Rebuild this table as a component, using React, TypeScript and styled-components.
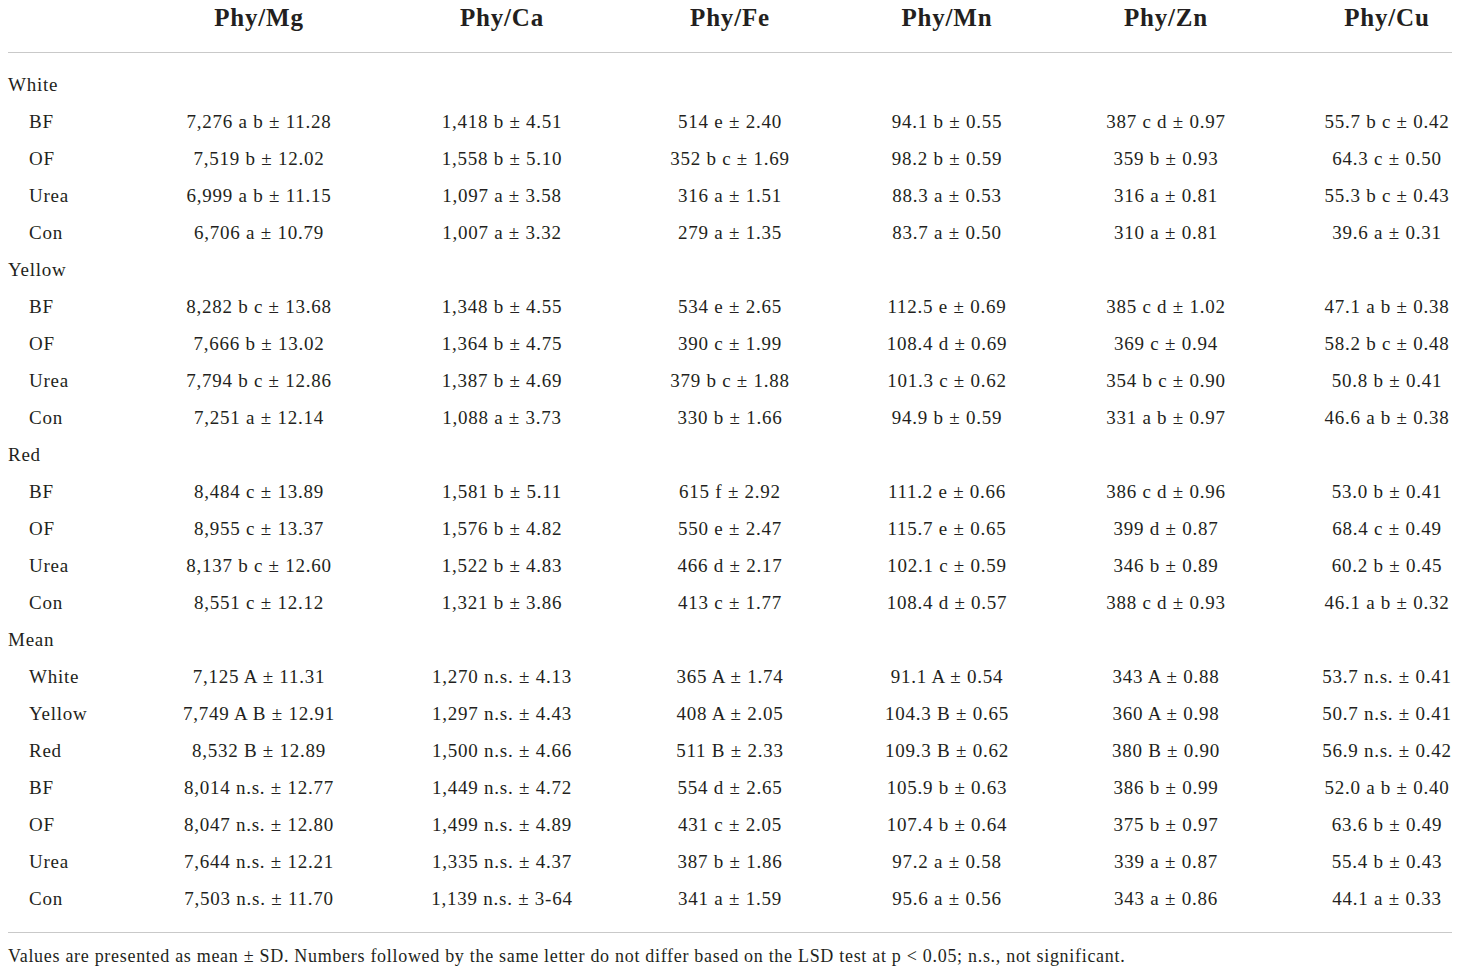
import React from "react";
import styled, { createGlobalStyle } from "styled-components";

const Global = createGlobalStyle`
  html, body { margin: 0; padding: 0; background: #fff; }
  body { font-family: "Liberation Serif", "Times New Roman", serif; color: #231f20; }
`;

const COLS = "82px 338px 148px 308px 126px 312px 130px";

const Page = styled.div`
  width: 1444px;
  padding: 0 8px;
`;

const HeaderRow = styled.div`
  display: grid;
  grid-template-columns: ${COLS};
  height: 53px;
  box-sizing: border-box;
  padding-top: 3px;
  border-bottom: 1px solid #c9c9c9;
`;

const HeadCell = styled.div`
  font-weight: bold;
  font-size: 25px;
  letter-spacing: 0.8px;
  line-height: 30px;
  text-align: center;
  color: #231f20;
`;

const Body = styled.div`
  padding: 13px 0 15px;
  border-bottom: 1px solid #c9c9c9;
`;

const Row = styled.div`
  display: grid;
  grid-template-columns: ${COLS};
  height: 37px;
  align-items: center;
  font-size: 19px;
  letter-spacing: 0.75px;
`;

const Label = styled.div<{ $indent?: boolean }>`
  padding-left: ${(p) => (p.$indent ? "21px" : "0")};
  white-space: nowrap;
`;

const Cell = styled.div`
  text-align: center;
  white-space: nowrap;
`;

const Note = styled.p`
  margin: 0;
  padding-top: 12px;
  font-size: 18px;
  letter-spacing: 0.7px;
  line-height: 22px;
  color: #231f20;
  white-space: nowrap;
`;

const headers = ["Phy/Mg", "Phy/Ca", "Phy/Fe", "Phy/Mn", "Phy/Zn", "Phy/Cu"];

type R = { label: string; group?: boolean; values?: string[] };

const rows: R[] = [
  { label: "White", group: true },
  { label: "BF", values: ["7,276 a b ± 11.28", "1,418 b ± 4.51", "514 e ± 2.40", "94.1 b ± 0.55", "387 c d ± 0.97", "55.7 b c ± 0.42"] },
  { label: "OF", values: ["7,519 b ± 12.02", "1,558 b ± 5.10", "352 b c ± 1.69", "98.2 b ± 0.59", "359 b ± 0.93", "64.3 c ± 0.50"] },
  { label: "Urea", values: ["6,999 a b ± 11.15", "1,097 a ± 3.58", "316 a ± 1.51", "88.3 a ± 0.53", "316 a ± 0.81", "55.3 b c ± 0.43"] },
  { label: "Con", values: ["6,706 a ± 10.79", "1,007 a ± 3.32", "279 a ± 1.35", "83.7 a ± 0.50", "310 a ± 0.81", "39.6 a ± 0.31"] },
  { label: "Yellow", group: true },
  { label: "BF", values: ["8,282 b c ± 13.68", "1,348 b ± 4.55", "534 e ± 2.65", "112.5 e ± 0.69", "385 c d ± 1.02", "47.1 a b ± 0.38"] },
  { label: "OF", values: ["7,666 b ± 13.02", "1,364 b ± 4.75", "390 c ± 1.99", "108.4 d ± 0.69", "369 c ± 0.94", "58.2 b c ± 0.48"] },
  { label: "Urea", values: ["7,794 b c ± 12.86", "1,387 b ± 4.69", "379 b c ± 1.88", "101.3 c ± 0.62", "354 b c ± 0.90", "50.8 b ± 0.41"] },
  { label: "Con", values: ["7,251 a ± 12.14", "1,088 a ± 3.73", "330 b ± 1.66", "94.9 b ± 0.59", "331 a b ± 0.97", "46.6 a b ± 0.38"] },
  { label: "Red", group: true },
  { label: "BF", values: ["8,484 c ± 13.89", "1,581 b ± 5.11", "615 f ± 2.92", "111.2 e ± 0.66", "386 c d ± 0.96", "53.0 b ± 0.41"] },
  { label: "OF", values: ["8,955 c ± 13.37", "1,576 b ± 4.82", "550 e ± 2.47", "115.7 e ± 0.65", "399 d ± 0.87", "68.4 c ± 0.49"] },
  { label: "Urea", values: ["8,137 b c ± 12.60", "1,522 b ± 4.83", "466 d ± 2.17", "102.1 c ± 0.59", "346 b ± 0.89", "60.2 b ± 0.45"] },
  { label: "Con", values: ["8,551 c ± 12.12", "1,321 b ± 3.86", "413 c ± 1.77", "108.4 d ± 0.57", "388 c d ± 0.93", "46.1 a b ± 0.32"] },
  { label: "Mean", group: true },
  { label: "White", values: ["7,125 A ± 11.31", "1,270 n.s. ± 4.13", "365 A ± 1.74", "91.1 A ± 0.54", "343 A ± 0.88", "53.7 n.s. ± 0.41"] },
  { label: "Yellow", values: ["7,749 A B ± 12.91", "1,297 n.s. ± 4.43", "408 A ± 2.05", "104.3 B ± 0.65", "360 A ± 0.98", "50.7 n.s. ± 0.41"] },
  { label: "Red", values: ["8,532 B ± 12.89", "1,500 n.s. ± 4.66", "511 B ± 2.33", "109.3 B ± 0.62", "380 B ± 0.90", "56.9 n.s. ± 0.42"] },
  { label: "BF", values: ["8,014 n.s. ± 12.77", "1,449 n.s. ± 4.72", "554 d ± 2.65", "105.9 b ± 0.63", "386 b ± 0.99", "52.0 a b ± 0.40"] },
  { label: "OF", values: ["8,047 n.s. ± 12.80", "1,499 n.s. ± 4.89", "431 c ± 2.05", "107.4 b ± 0.64", "375 b ± 0.97", "63.6 b ± 0.49"] },
  { label: "Urea", values: ["7,644 n.s. ± 12.21", "1,335 n.s. ± 4.37", "387 b ± 1.86", "97.2 a ± 0.58", "339 a ± 0.87", "55.4 b ± 0.43"] },
  { label: "Con", values: ["7,503 n.s. ± 11.70", "1,139 n.s. ± 3-64", "341 a ± 1.59", "95.6 a ± 0.56", "343 a ± 0.86", "44.1 a ± 0.33"] },
];

export default function App() {
  return (
    <Page>
      <Global />
      <HeaderRow>
        <div />
        {headers.map((h) => (
          <HeadCell key={h}>{h}</HeadCell>
        ))}
      </HeaderRow>
      <Body>
        {rows.map((r, i) => (
          <Row key={i}>
            <Label $indent={!r.group}>{r.label}</Label>
            {(r.values ?? ["", "", "", "", "", ""]).map((v, j) => (
              <Cell key={j}>{v}</Cell>
            ))}
          </Row>
        ))}
      </Body>
      <Note>
        Values are presented as mean ± SD. Numbers followed by the same letter do not differ based on the LSD test at p &lt; 0.05; n.s., not significant.
      </Note>
    </Page>
  );
}
